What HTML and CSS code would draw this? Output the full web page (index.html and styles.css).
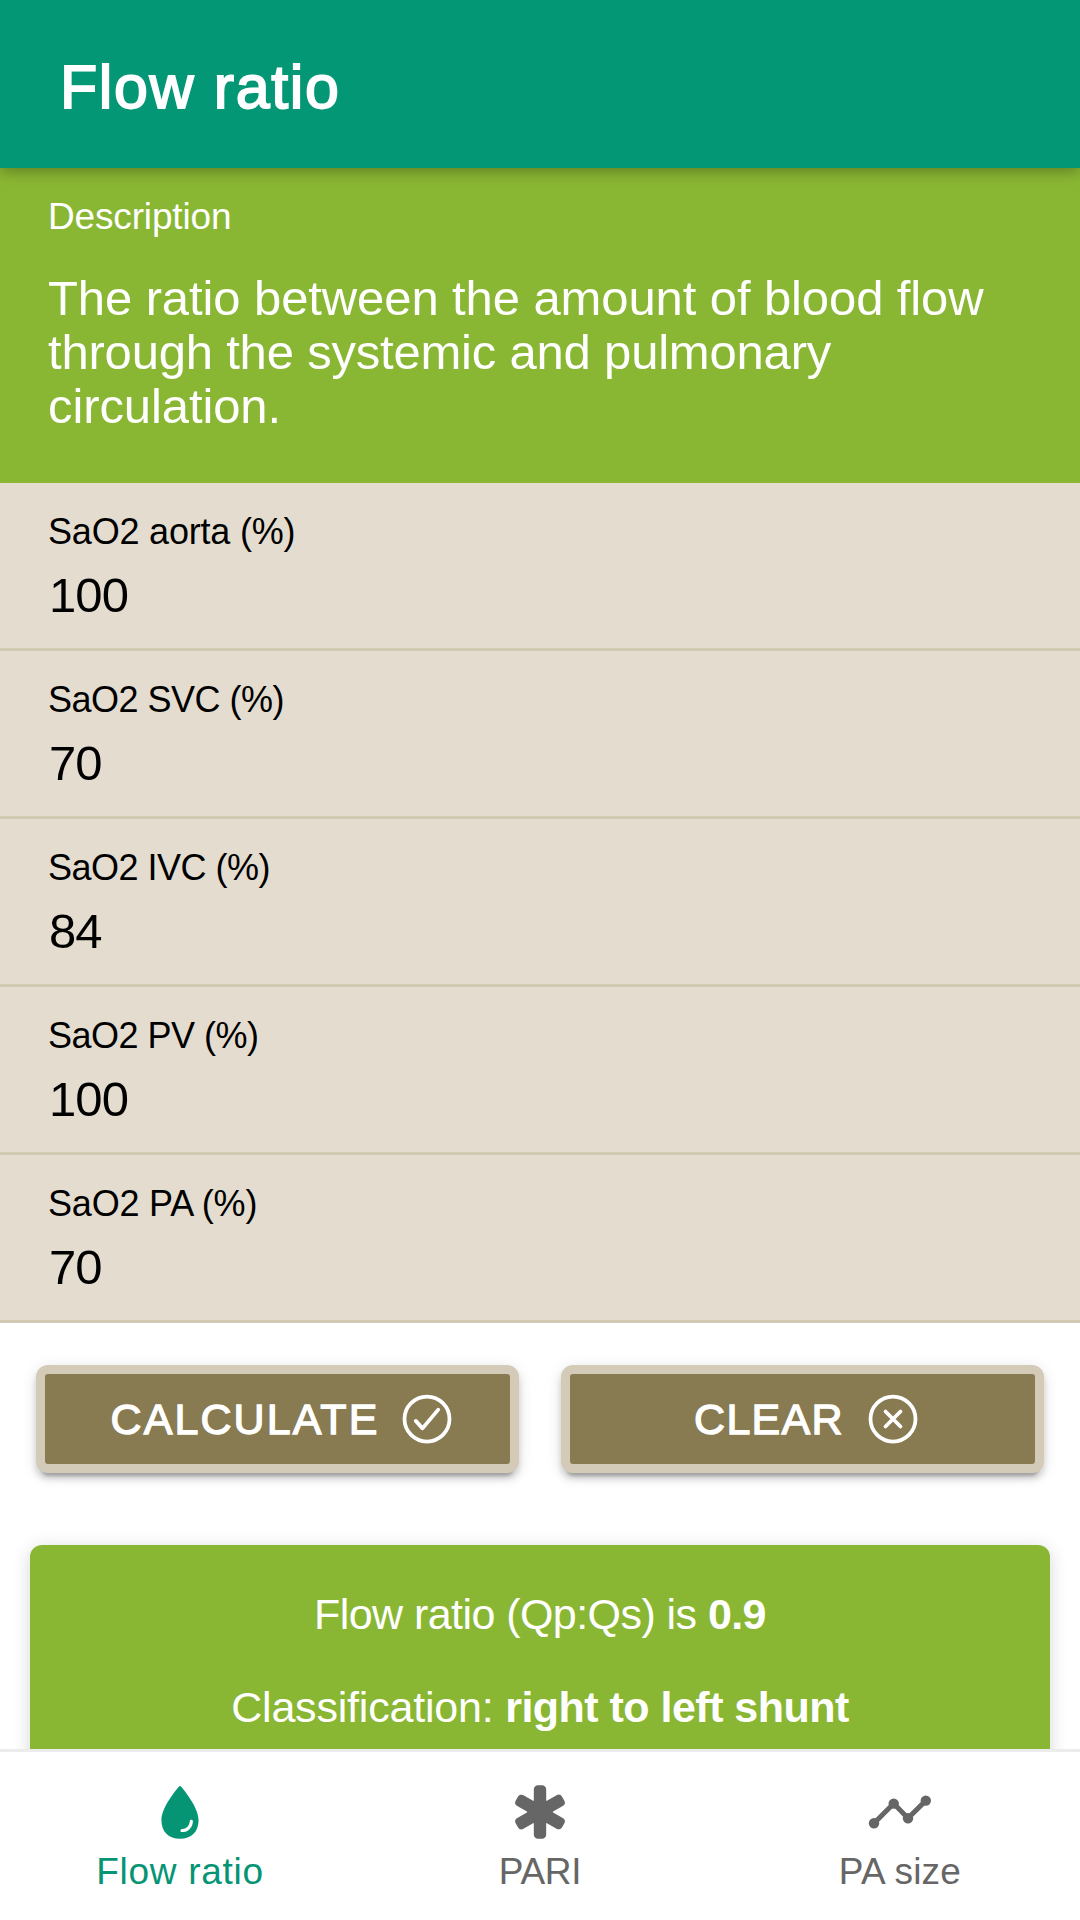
FILE: index.html
```html
<!DOCTYPE html>
<html lang="en">
<head>
<meta charset="utf-8">
<title>Flow ratio</title>
<link rel="stylesheet" href="styles.css">
</head>
<body>
<header class="toolbar"><h1 class="title">Flow ratio</h1></header>
<main class="content">
  <section class="description">
    <div class="description-label">Description</div>
    <p class="description-text">The ratio between the amount of blood flow<br><span class="middle-line">through the systemic and pulmonary</span><br>circulation.</p>
  </section>
  <section class="fields">
    <div class="field"><div class="field-label aorta">SaO2 aorta (%)</div><div class="field-value">100</div></div>
    <div class="field"><div class="field-label">SaO2 SVC (%)</div><div class="field-value">70</div></div>
    <div class="field"><div class="field-label">SaO2 IVC (%)</div><div class="field-value">84</div></div>
    <div class="field"><div class="field-label">SaO2 PV (%)</div><div class="field-value">100</div></div>
    <div class="field"><div class="field-label pa">SaO2 PA (%)</div><div class="field-value">70</div></div>
  </section>
  <div class="actions">
    <button class="button calculate" type="button">CALCULATE
      <svg class="button-icon" viewBox="0 0 512 512"><circle cx="256" cy="256" r="192"/><path d="M352 176L217.6 336 160 272"/></svg>
    </button>
    <button class="button clear" type="button">CLEAR
      <svg class="button-icon" viewBox="0 0 512 512"><circle cx="256" cy="256" r="192"/><path d="M320 320L192 192M192 320l128-128"/></svg>
    </button>
  </div>
  <section class="result">
    <p class="result-line">Flow ratio (Qp:Qs) is <b>0.9</b></p>
    <p class="result-line classification">Classification: <b>right to left shunt</b></p>
  </section>
</main>
<nav class="tabs">
  <a class="tab active">
    <svg class="tab-icon" viewBox="0 0 512 512"><path d="M265.12 60.12a12 12 0 00-18.23 0C215.23 97.15 112 225.17 112 320c0 88.37 55.64 144 144 144s144-55.63 144-144c0-94.83-103.23-222.85-134.88-259.88zM272 412a12 12 0 01-11.34-16 11.89 11.89 0 0111.41-8A60.06 60.06 0 00332 328.07a11.89 11.89 0 018-11.41A12 12 0 01356 328a84.09 84.09 0 01-84 84z"/></svg>
    <span class="tab-label flow">Flow ratio</span>
  </a>
  <a class="tab">
    <svg class="tab-icon" viewBox="0 0 512 512"><path d="M272 464h-32a32 32 0 01-32-32l.05-85.82a4 4 0 00-6-3.47l-74.34 43.06a31.48 31.48 0 01-43-11.52l-16.5-28.64-.06-.1a31.65 31.65 0 0111.56-42.8l74.61-43.25a4 4 0 000-6.92l-74.54-43.21a31.41 31.41 0 01-11.55-43l16.44-28.55a31.48 31.48 0 0119.27-14.74 31.14 31.14 0 0123.8 3.2l74.31 43a4 4 0 006-3.47L208 80a32 32 0 0132-32h32a32 32 0 0132 32v85.72a4 4 0 006 3.47l74.34-43.06a31.51 31.51 0 0143 11.52l16.49 28.64.06.09a31.52 31.52 0 01-11.64 42.86l-74.53 43.2a4 4 0 000 6.92l74.53 43.2a31.42 31.42 0 0111.56 43l-16.44 28.55a31.48 31.48 0 01-19.27 14.74 31.14 31.14 0 01-23.8-3.2l-74.31-43a4 4 0 00-6 3.46L304 432a32 32 0 01-32 32z"/></svg>
    <span class="tab-label pari">PARI</span>
  </a>
  <a class="tab">
    <svg class="tab-icon" viewBox="0 0 66 66"><path class="chart-line" d="M7 44.3L26.7 24.6 41 39.2 58.8 21.6"/><circle cx="7" cy="44.3" r="5.2"/><circle cx="26.7" cy="24.6" r="5.2"/><circle cx="41" cy="39.2" r="5.2"/><circle cx="58.8" cy="21.6" r="5.2"/></svg>
    <span class="tab-label">PA size</span>
  </a>
</nav>
</body>
</html>
```
FILE: styles.css
```css
* { box-sizing: border-box; }

body {
  margin: 0;
  height: 1920px;
  display: flex;
  flex-direction: column;
  overflow: hidden;
  background: #fff;
  font-family: "Liberation Sans", Arial, sans-serif;
}

h1, p { margin: 0; }

.toolbar {
  position: relative;
  z-index: 1;
  flex: none;
  height: 168px;
  padding: 5px 60px 0;
  display: flex;
  align-items: center;
  background: #039776;
  box-shadow: 0 3px 14px rgba(0, 0, 0, 0.32);
}

.title {
  color: #fff;
  font-size: 61px;
  font-weight: 400;
  letter-spacing: 1.6px;
  -webkit-text-stroke: 1.8px #fff;
}

.content {
  flex: 1;
  min-height: 0;
  overflow: hidden;
}

.description {
  height: 315px;
  padding: 27px 48px 0;
  display: flex;
  flex-direction: column;
  gap: 32px;
  background: #8ab733;
  color: #fff;
}

.description-label {
  font-size: 37px;
  line-height: 44px;
  letter-spacing: -0.15px;
}

.description-text {
  font-size: 49px;
  line-height: 54px;
  letter-spacing: -0.1px;
  white-space: nowrap;
}

.middle-line { letter-spacing: -0.2px; }

.field {
  height: 168px;
  padding: 27px 48px 0;
  display: flex;
  flex-direction: column;
  gap: 14px;
  background: #e4ddcf;
  border-bottom: 3px solid #d2c9b3;
  color: #000;
}

.field-label {
  font-size: 36px;
  line-height: 44px;
  letter-spacing: -0.5px;
}

.field-label.aorta { letter-spacing: -0.2px; }
.field-label.pa { letter-spacing: -0.2px; }

.field-value {
  padding-left: 1px;
  font-size: 49px;
  line-height: 54px;
  letter-spacing: -0.9px;
}

.actions {
  padding: 42px 36px 0;
  display: grid;
  grid-template-columns: 1fr 1fr;
  gap: 42px;
}

.button {
  height: 108px;
  padding: 0 0 0 12px;
  display: flex;
  align-items: center;
  justify-content: center;
  background: #887a51;
  border: 9px solid #d3cbb7;
  border-radius: 12px;
  box-shadow: 0 9px 3px -6px rgba(0, 0, 0, 0.2), 0 6px 6px rgba(0, 0, 0, 0.14), 0 3px 15px rgba(0, 0, 0, 0.12);
  color: #fff;
  font-family: inherit;
  font-size: 43px;
  -webkit-text-stroke: 1.3px #fff;
}

.calculate { gap: 17px; letter-spacing: 2.1px; }
.clear { gap: 19px; letter-spacing: 1.3px; }

.button-icon {
  flex: none;
  width: 60px;
  height: 60px;
  fill: none;
  stroke: #fff;
  stroke-width: 32;
  stroke-linecap: round;
  stroke-linejoin: round;
  -webkit-text-stroke: 0;
}

.result {
  height: 300px;
  margin: 72px 30px 0;
  padding-top: 42px;
  display: flex;
  flex-direction: column;
  align-items: center;
  gap: 39px;
  background: #8ab733;
  border-radius: 12px;
  box-shadow: 0 3px 18px rgba(0, 0, 0, 0.16);
  color: #fff;
}

.result-line {
  font-size: 43px;
  line-height: 54px;
  letter-spacing: -0.56px;
  white-space: nowrap;
}

.classification { letter-spacing: -0.2px; }
.classification b { letter-spacing: -0.52px; }

.tabs {
  flex: none;
  height: 171px;
  border-top: 3px solid #ececec;
  background: #fff;
  display: grid;
  grid-template-columns: repeat(3, 1fr);
}

.tab {
  padding-top: 27px;
  display: flex;
  flex-direction: column;
  align-items: center;
  gap: 6px;
  color: #666;
}

.tab.active { color: #059474; }

.tab-icon {
  width: 66px;
  height: 66px;
  fill: currentColor;
}

.chart-line {
  fill: none;
  stroke: currentColor;
  stroke-width: 5;
}

.tab-label {
  font-size: 37px;
  line-height: 42px;
  letter-spacing: 0.25px;
}

.tab-label.flow { letter-spacing: 0.7px; }
.tab-label.pari { letter-spacing: -0.3px; }
```
